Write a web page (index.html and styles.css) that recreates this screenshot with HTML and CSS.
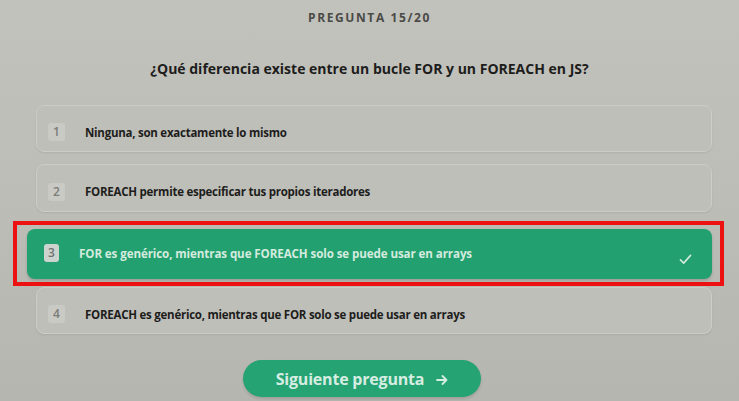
FILE: index.html
```html
<!DOCTYPE html>
<html lang="es">
<head>
<meta charset="utf-8">
<title>Pregunta 15/20</title>
<link rel="stylesheet" href="styles.css">
</head>
<body>
<main class="quiz">
  <p class="counter">PREGUNTA 15/20</p>
  <h1 class="question">¿Qué diferencia existe entre un bucle FOR y un FOREACH en JS?</h1>
  <ol class="options">
    <li class="option option--first"><span class="badge">1</span><span class="label">Ninguna, son exactamente lo mismo</span></li>
    <li class="option option--second"><span class="badge">2</span><span class="label">FOREACH permite especificar tus propios iteradores</span></li>
    <li class="highlight">
      <div class="option option--correct"><span class="badge">3</span><span class="label">FOR es genérico, mientras que FOREACH solo se puede usar en arrays</span>
        <svg class="check" viewBox="0 0 14 12" width="13" height="11"><path d="M1.5 6.5 L5 10 L12.5 1.5" fill="none" stroke="#cfe9dc" stroke-width="1.8" stroke-linecap="round" stroke-linejoin="round"/></svg>
      </div>
    </li>
    <li class="option option--fourth"><span class="badge">4</span><span class="label">FOREACH es genérico, mientras que FOR solo se puede usar en arrays</span></li>
  </ol>
  <div class="actions">
    <button class="next" type="button">Siguiente pregunta<svg class="arrow" viewBox="0 0 12 10" width="12" height="10"><path d="M1 5 H10.5 M6.5 1 L10.5 5 L6.5 9" fill="none" stroke="#d6ede2" stroke-width="1.8" stroke-linecap="round" stroke-linejoin="round"/></svg></button>
  </div>
</main>
</body>
</html>
```

FILE: styles.css
```css
html, body {
  margin: 0;
  padding: 0;
}
body {
  width: 739px;
  height: 401px;
  overflow: hidden;
  background: linear-gradient(180deg, #c2c2bc 0%, #bdbdb7 50%, #b6b6b0 100%);
  font-family: "Open Sans", "Noto Sans", sans-serif;
  color: #1f1f1e;
}
.quiz {
  display: flex;
  flex-direction: column;
  padding-top: 10px;
}
.counter {
  margin: 0;
  text-align: center;
  font-size: 12px;
  line-height: 16px;
  font-weight: 700;
  letter-spacing: 1.6px;
  color: #4a4a47;
}
.question {
  margin: 33px 0 0;
  text-align: center;
  font-size: 14px;
  line-height: 20px;
  font-weight: 700;
  color: #1d1d1c;
}
.options {
  list-style: none;
  margin: 26px 27px 0 36px;
  padding: 0;
  display: flex;
  flex-direction: column;
}
.option {
  display: flex;
  align-items: center;
  box-sizing: border-box;
  height: 47px;
  padding: 7px 16px 0 11px;
  border: 1.5px solid #cdcdc8;
  border-radius: 8px;
  background: #bfbfb9;
  box-shadow: 0 1px 2px rgba(0,0,0,0.08);
}
.option--second {
  margin-top: 12px;
  height: 48px;
}
.option--fourth {
  margin-top: 1px;
}
.badge {
  flex: none;
  width: 17px;
  height: 18px;
  border-radius: 3px;
  background: #cacac5;
  color: #7c7c79;
  font-size: 12px;
  font-weight: 600;
  line-height: 18px;
  text-align: center;
}
.label {
  margin-left: 20px;
  font-size: 11.5px;
  font-weight: 700;
  letter-spacing: -0.25px;
  color: #1d1d1c;
}
.highlight {
  margin: 9px -12px 0 -23px;
  height: 65px;
  box-sizing: border-box;
  border: 4px solid #ee1111;
  padding: 4px 8px 0 10px;
}
.option--correct {
  height: 50px;
  padding: 0 20px 2px 17px;
  border: none;
  background: #23a06f;
  border-radius: 8px;
  box-shadow: 0 2px 3px rgba(0,0,0,0.15);
}
.option--correct .badge {
  width: 15px;
  height: 18px;
  background: #cdd3cf;
  color: #6f7270;
}
.option--correct .label {
  margin-left: 20px;
  color: #d4ebdf;
  font-size: 11.6px;
  letter-spacing: -0.1px;
}
.check {
  margin-left: auto;
  margin-top: 12px;
}
.actions {
  display: flex;
  justify-content: center;
  margin-top: 26px;
  padding-right: 15px;
}
.next {
  display: flex;
  align-items: center;
  justify-content: center;
  width: 238px;
  height: 37px;
  border: none;
  border-radius: 19px;
  background: #25a372;
  color: #d6ede2;
  font-family: "Open Sans", "Noto Sans", sans-serif;
  font-size: 16px;
  font-weight: 700;
  letter-spacing: -0.2px;
  box-shadow: 0 2px 3px rgba(0,0,0,0.12);
}
.arrow {
  margin-left: 12px;
  margin-top: 2px;
}
```
